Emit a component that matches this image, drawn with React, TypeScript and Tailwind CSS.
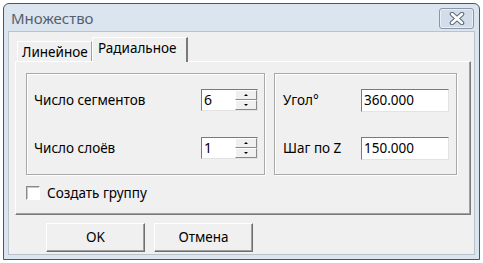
import React from "react";

const font = { fontFamily: '"Noto Sans", "Open Sans", sans-serif' };

function Spin({ value }: { value: string }) {
  return (
    <div className="flex h-[22px] w-[57px] border-t border-l border-[#7a7a7a] border-b border-r border-b-[#e3e3e3] border-r-[#e3e3e3] bg-white">
      <div className="flex-1 pl-[2px] text-[14px] leading-[20px] text-black">{value}</div>
      <div className="flex w-[22px] flex-col bg-[#f0f0f0]">
        <div className="flex flex-1 items-center justify-center border-t border-l border-white border-b border-r border-b-[#8a8a8a] border-r-[#8a8a8a]">
          <div className="h-0 w-0 border-x-[2px] border-b-[2px] border-x-transparent border-b-black" />
        </div>
        <div className="flex flex-1 items-center justify-center border-t border-l border-white border-b border-r border-b-[#8a8a8a] border-r-[#8a8a8a]">
          <div className="h-0 w-0 border-x-[2px] border-t-[2px] border-x-transparent border-t-black" />
        </div>
      </div>
    </div>
  );
}

function Edit({ value }: { value: string }) {
  return (
    <div className="h-[23px] w-[88px] border-t border-l border-[#7a7a7a] border-b border-r border-b-[#e3e3e3] border-r-[#e3e3e3] bg-white pl-[2px] text-[13.5px] leading-[20px] text-black">
      {value}
    </div>
  );
}

function Group({ children, w }: { children: React.ReactNode; w: string }) {
  return (
    <div className={`${w} h-[102px] border border-[#a9a9a9] shadow-[inset_1px_1px_0_#ffffff,1px_1px_0_#ffffff]`}>
      {children}
    </div>
  );
}

function Button({ label }: { label: string }) {
  return (
    <div className="flex h-[29px] w-[99px] items-center justify-center border-t border-l border-white border-b border-r border-b-[#6e6e6e] border-r-[#6e6e6e] bg-[#f0f0f0] text-[13.5px] text-black shadow-[inset_-1px_-1px_0_#a0a0a0]">
      {label}
    </div>
  );
}

export default function App() {
  return (
    <div className="h-[263px] w-[483px] bg-white" style={font}>
      <div className="ml-[3px] mt-[3px] flex h-[257px] w-[477px] flex-col rounded-t-[6px] border border-[#4d5560] bg-[#dbe5ef] px-[4px] pb-[4px]">
        {/* title bar */}
        <div className="flex h-[27px] items-start justify-between">
          <div className="pl-[3px] pt-[4px] text-[15px] leading-[20px] text-[#545f6d]">Множество</div>
          <div className="mr-[1px] mt-[4px] flex h-[21px] w-[35px] items-center justify-center rounded-[3px] border border-[#8896a8] bg-[#d2dde9] shadow-[inset_0_0_0_1px_#e6eef6]">
            <svg width="16" height="13" viewBox="0 0 16 13">
              <path d="M3 2 L13 11 M13 2 L3 11" stroke="#5a6878" strokeWidth="4.5" strokeLinecap="round" />
              <path d="M3 2 L13 11 M13 2 L3 11" stroke="#ffffff" strokeWidth="2.5" strokeLinecap="round" />
            </svg>
          </div>
        </div>
        {/* client */}
        <div className="flex flex-1 flex-col border border-[#b9c3cd] bg-[#f0f0f0] px-[6px] pt-[5px]">
          {/* tabs */}
          <div className="flex h-[24px] items-end pl-[2px]">
            <div className="h-[20px] w-[75px] border-t border-l border-white border-r border-r-[#a0a0a0] pl-[4px] text-[13.5px] leading-[20px] text-black">
              Линейное
            </div>
            <div className="relative z-10 -mb-[1px] h-[25px] w-[96px] border-t border-l border-white border-r-2 border-r-[#7a7a7a] bg-[#f0f0f0] pl-[5px] text-[13.5px] leading-[21px] text-black">
              Радиальное
            </div>
          </div>
          {/* panel */}
          <div className="h-[154px] w-[456px] border-t border-l border-white border-b border-r border-b-[#7a7a7a] border-r-[#7a7a7a] pl-[10px] pt-[11px] shadow-[inset_-1px_-1px_0_#a0a0a0]">
            <div className="flex gap-[9px]">
              <Group w="w-[239px]">
                <div className="flex flex-col gap-[26px] pl-[7px] pt-[15px]">
                  <div className="flex items-center justify-between pr-[6px]">
                    <span className="text-[13.5px] text-black">Число сегментов</span>
                    <Spin value="6" />
                  </div>
                  <div className="flex items-center justify-between pr-[6px]">
                    <span className="text-[13.5px] text-black">Число слоёв</span>
                    <Spin value="1" />
                  </div>
                </div>
              </Group>
              <Group w="w-[183px]">
                <div className="flex flex-col gap-[25px] pl-[8px] pt-[15px]">
                  <div className="flex items-center justify-between pr-[7px]">
                    <span className="text-[13.5px] text-black">Угол°</span>
                    <Edit value="360.000" />
                  </div>
                  <div className="flex items-center justify-between pr-[7px]">
                    <span className="text-[13.5px] text-black">Шаг по Z</span>
                    <Edit value="150.000" />
                  </div>
                </div>
              </Group>
            </div>
            <div className="mt-[8px] flex items-center gap-[7px]">
              <div className="h-[14px] w-[14px] border-t border-l border-[#8a8a8a] border-b border-r border-b-white border-r-white bg-white shadow-[inset_1px_1px_0_#c8c8c8]" />
              <span className="text-[13.5px] text-black">Создать группу</span>
            </div>
          </div>
          {/* buttons */}
          <div className="mt-[8px] flex gap-[9px] pl-[31px]">
            <Button label="OK" />
            <Button label="Отмена" />
          </div>
        </div>
      </div>
    </div>
  );
}
